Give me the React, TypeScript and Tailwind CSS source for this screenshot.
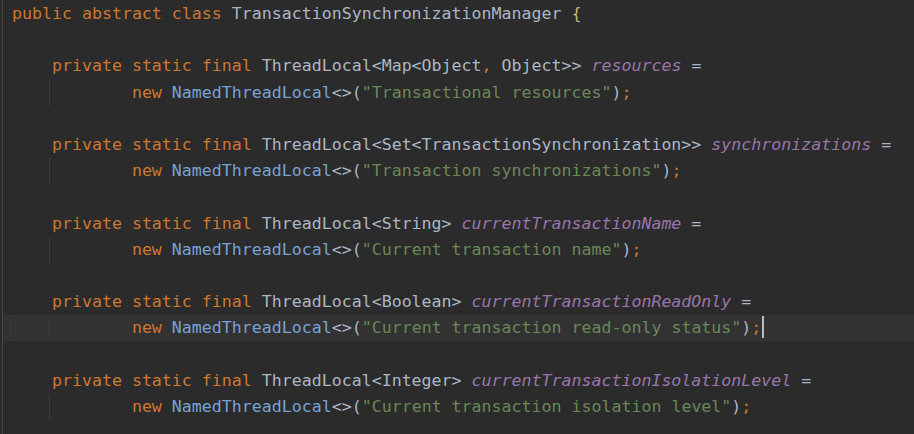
import React from "react";

type Tok = [string, string];

const K = "text-[#cc7832]";
const T = "text-[#a9b7c6]";
const C = "text-[#77a2d6]";
const F = "text-[#9876aa] italic";
const S = "text-[#6a8759]";

const decl = (type: Tok[], name: string, label: string): Tok[][] => [
  [
    ["    ", T],
    ["private static final ", K],
    ...type,
    [name, F],
    [" =", T],
  ],
  [
    ["            ", T],
    ["new ", K],
    ["NamedThreadLocal", C],
    ["<>(", T],
    [`"${label}"`, S],
    [")", T],
    [";", K],
  ],
];

const lines: (Tok[] | null)[] = [
  [
    ["public abstract class ", K],
    ["TransactionSynchronizationManager ", T],
    ["{", "text-[#d2b16a]"],
  ],
  null,
  ...decl(
    [
      ["ThreadLocal<Map<Object", T],
      [", ", K],
      ["Object>> ", T],
    ],
    "resources",
    "Transactional resources"
  ),
  null,
  ...decl([["ThreadLocal<Set<TransactionSynchronization>> ", T]], "synchronizations", "Transaction synchronizations"),
  null,
  ...decl([["ThreadLocal<String> ", T]], "currentTransactionName", "Current transaction name"),
  null,
  ...decl([["ThreadLocal<Boolean> ", T]], "currentTransactionReadOnly", "Current transaction read-only status"),
  null,
  ...decl([["ThreadLocal<Integer> ", T]], "currentTransactionIsolationLevel", "Current transaction isolation level"),
];

const CURRENT = 12;

export default function App() {
  return (
    <div className="w-[914px] h-[434px] bg-[#2b2b2b] overflow-hidden flex">
      <div className="ml-[2px] w-[1px] h-full bg-[#464646]" />
      <div
        className="flex-1 pt-[1px] text-[16.6px]"
        style={{ fontFamily: '"DejaVu Sans Mono", "Liberation Mono", monospace' }}
      >
        {lines.map((line, i) => {
          const cont = line !== null && i > 0 && line[0][0].length === 12;
          return (
            <div
              key={i}
              className={`relative h-[26.2px] leading-[26.2px] whitespace-pre pl-[9px] ${
                i === CURRENT ? "bg-[#323232]" : ""
              }`}
            >
              {i === CURRENT && <span className="absolute left-[7px] top-0 h-full w-[1px] bg-[#3a3a3a]" />}
              {cont && <span className="absolute left-[46px] top-0 h-full w-[1px] bg-[#3b3b3b]" />}
              {line?.map(([text, cls], j) => (
                <span key={j} className={cls}>
                  {text}
                </span>
              ))}
              {i === CURRENT && (
                <span className="inline-block w-[2px] h-[22px] bg-[#bbbbbb] align-middle ml-[1px] -mt-[3px]" />
              )}
            </div>
          );
        })}
      </div>
    </div>
  );
}
